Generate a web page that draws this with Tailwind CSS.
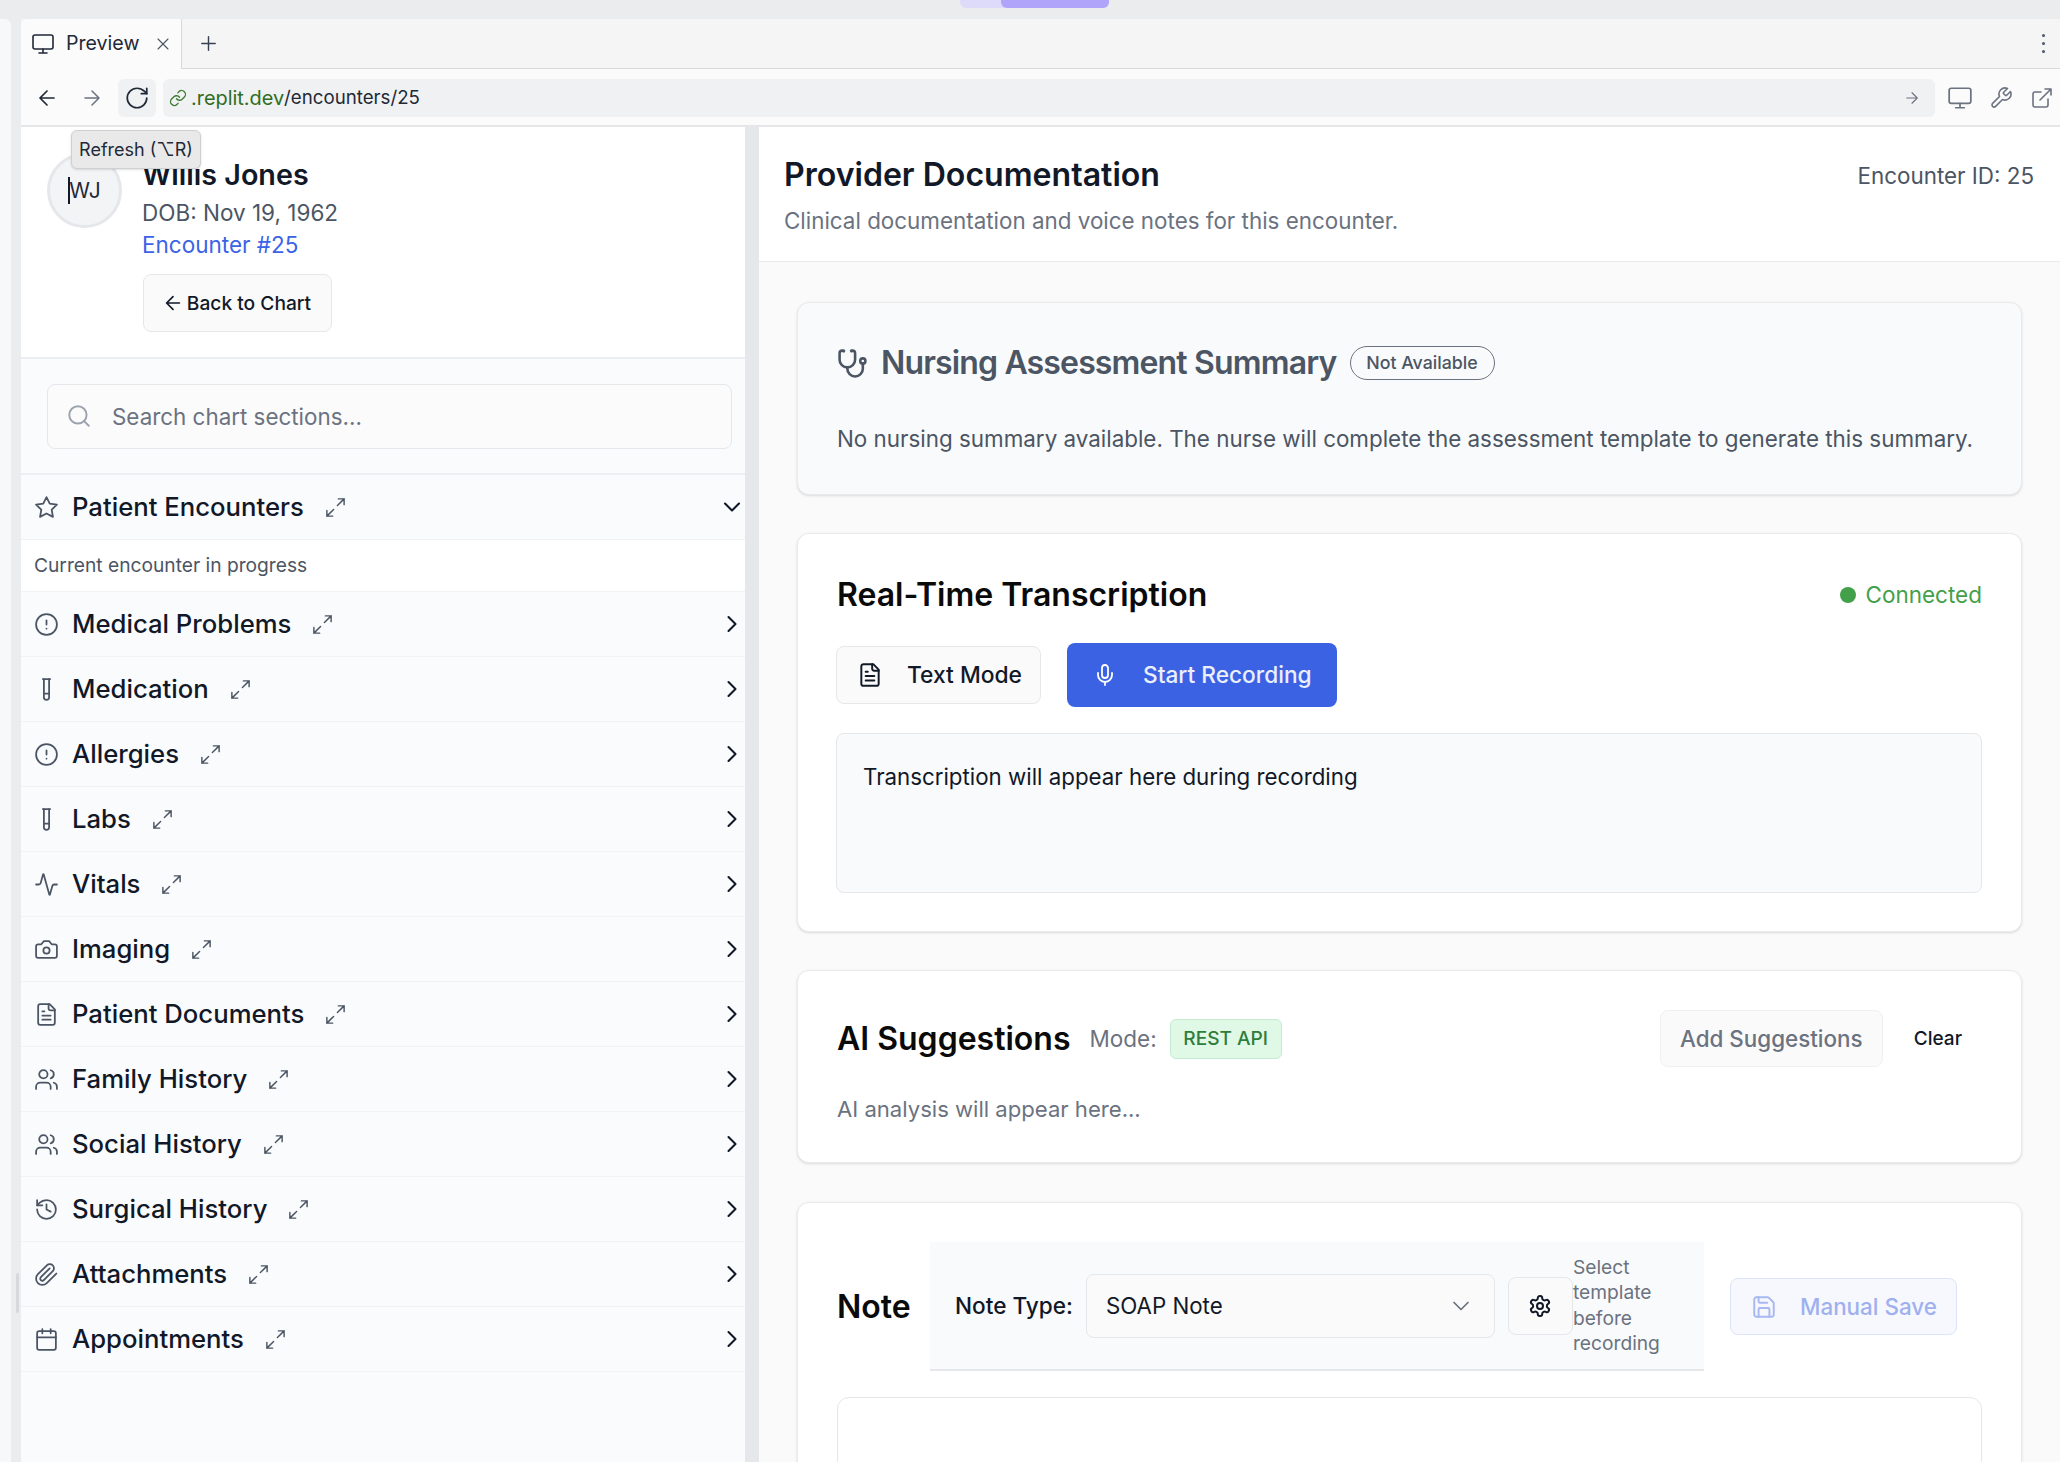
<!DOCTYPE html>
<html lang="en">
<head>
  <meta charset="UTF-8" />
  <title>Provider Documentation - Preview</title>
  <script src="https://cdn.jsdelivr.net/npm/@tailwindcss/browser@4"></script>
</head>
<body class="w-[2060px] h-[1462px] overflow-hidden bg-[#ebecee] font-['Inter',sans-serif] text-[#111827] [stroke-linecap:round] [stroke-linejoin:round]">

  <svg class="hidden">
    <symbol id="i-monitor" viewBox="0 0 24 24"><rect x="2" y="3" width="20" height="14" rx="2"/><path d="M8 21h8M12 17v4"/></symbol>
    <symbol id="i-x" viewBox="0 0 24 24"><path d="M18 6 6 18M6 6l12 12"/></symbol>
    <symbol id="i-plus" viewBox="0 0 24 24"><path d="M5 12h14M12 5v14"/></symbol>
    <symbol id="i-left" viewBox="0 0 24 24"><path d="m12 19-7-7 7-7M19 12H5"/></symbol>
    <symbol id="i-right" viewBox="0 0 24 24"><path d="M5 12h14M12 5l7 7-7 7"/></symbol>
    <symbol id="i-refresh" viewBox="0 0 24 24"><path d="M21 12a9 9 0 1 1-9-9c2.52 0 4.93 1 6.74 2.74L21 8"/><path d="M21 3v5h-5"/></symbol>
    <symbol id="i-link" viewBox="0 0 24 24"><path d="M10 13a5 5 0 0 0 7.54.54l3-3a5 5 0 0 0-7.07-7.07l-1.72 1.71"/><path d="M14 11a5 5 0 0 0-7.54-.54l-3 3a5 5 0 0 0 7.07 7.07l1.71-1.71"/></symbol>
    <symbol id="i-wrench" viewBox="0 0 24 24"><path d="M14.7 6.3a1 1 0 0 0 0 1.4l1.6 1.6a1 1 0 0 0 1.4 0l3.77-3.77a6 6 0 0 1-7.94 7.94l-6.91 6.91a2.12 2.12 0 0 1-3-3l6.91-6.91a6 6 0 0 1 7.94-7.94l-3.76 3.76z"/></symbol>
    <symbol id="i-external" viewBox="0 0 24 24"><path d="M15 3h6v6M10 14 21 3"/><path d="M18 13v6a2 2 0 0 1-2 2H5a2 2 0 0 1-2-2V8a2 2 0 0 1 2-2h6"/></symbol>
    <symbol id="i-search" viewBox="0 0 24 24"><circle cx="11" cy="11" r="8"/><path d="m21 21-4.3-4.3"/></symbol>
    <symbol id="i-star" viewBox="0 0 24 24"><polygon points="12 2 15.09 8.26 22 9.27 17 14.14 18.18 21.02 12 17.77 5.82 21.02 7 14.14 2 9.27 8.91 8.26 12 2"/></symbol>
    <symbol id="i-expand" viewBox="0 0 24 24"><path d="M15 3h6v6M21 3l-7 7M3 21l7-7M9 21H3v-6"/></symbol>
    <symbol id="i-down" viewBox="0 0 24 24"><path d="m6 9 6 6 6-6"/></symbol>
    <symbol id="i-chevron" viewBox="0 0 24 24"><path d="m9 18 6-6-6-6"/></symbol>
    <symbol id="i-alert" viewBox="0 0 24 24"><circle cx="12" cy="12" r="10"/><path d="M12 8v4M12 16h.01"/></symbol>
    <symbol id="i-tube" viewBox="0 0 24 24"><path d="M14.5 2v17.5c0 1.4-1.1 2.5-2.5 2.5s-2.5-1.1-2.5-2.5V2"/><path d="M8.5 2h7M14.5 16h-5"/></symbol>
    <symbol id="i-activity" viewBox="0 0 24 24"><path d="M22 12h-2.48a2 2 0 0 0-1.93 1.46l-2.35 8.36a.25.25 0 0 1-.48 0L9.24 2.18a.25.25 0 0 0-.48 0l-2.35 8.36A2 2 0 0 1 4.49 12H2"/></symbol>
    <symbol id="i-camera" viewBox="0 0 24 24"><path d="M14.5 4h-5L7 7H4a2 2 0 0 0-2 2v9a2 2 0 0 0 2 2h16a2 2 0 0 0 2-2V9a2 2 0 0 0-2-2h-3l-2.5-3z"/><circle cx="12" cy="13" r="3"/></symbol>
    <symbol id="i-file" viewBox="0 0 24 24"><path d="M15 2H6a2 2 0 0 0-2 2v16a2 2 0 0 0 2 2h12a2 2 0 0 0 2-2V7Z"/><path d="M14 2v4a2 2 0 0 0 2 2h4M10 9H8M16 13H8M16 17H8"/></symbol>
    <symbol id="i-users" viewBox="0 0 24 24"><path d="M16 21v-2a4 4 0 0 0-4-4H6a4 4 0 0 0-4 4v2"/><circle cx="9" cy="7" r="4"/><path d="M22 21v-2a4 4 0 0 0-3-3.87M16 3.13a4 4 0 0 1 0 7.75"/></symbol>
    <symbol id="i-history" viewBox="0 0 24 24"><path d="M3 12a9 9 0 1 0 9-9 9.75 9.75 0 0 0-6.74 2.74L3 8"/><path d="M3 3v5h5M12 7v5l4 2"/></symbol>
    <symbol id="i-clip" viewBox="0 0 24 24"><path d="m21.44 11.05-9.19 9.19a6 6 0 0 1-8.49-8.49l8.57-8.57A4 4 0 1 1 18 8.84l-8.59 8.57a2 2 0 0 1-2.83-2.83l8.49-8.48"/></symbol>
    <symbol id="i-calendar" viewBox="0 0 24 24"><path d="M8 2v4M16 2v4"/><rect x="3" y="4" width="18" height="18" rx="2"/><path d="M3 10h18"/></symbol>
    <symbol id="i-steth" viewBox="0 0 24 24"><path d="M4.8 2.3A.3.3 0 1 0 5 2H4a2 2 0 0 0-2 2v5a6 6 0 0 0 6 6 6 6 0 0 0 6-6V4a2 2 0 0 0-2-2h-1a.2.2 0 1 0 .3.3"/><path d="M8 15v1a6 6 0 0 0 6 6 6 6 0 0 0 6-6v-4"/><circle cx="20" cy="10" r="2"/></symbol>
    <symbol id="i-mic" viewBox="0 0 24 24"><path d="M12 2a3 3 0 0 0-3 3v7a3 3 0 0 0 6 0V5a3 3 0 0 0-3-3Z"/><path d="M19 10v2a7 7 0 0 1-14 0v-2M12 19v3"/></symbol>
    <symbol id="i-gear" viewBox="0 0 24 24"><path d="M12.22 2h-.44a2 2 0 0 0-2 2v.18a2 2 0 0 1-1 1.73l-.43.25a2 2 0 0 1-2 0l-.15-.08a2 2 0 0 0-2.73.73l-.22.38a2 2 0 0 0 .73 2.73l.15.1a2 2 0 0 1 1 1.72v.51a2 2 0 0 1-1 1.74l-.15.09a2 2 0 0 0-.73 2.73l.22.38a2 2 0 0 0 2.73.73l.15-.08a2 2 0 0 1 2 0l.43.25a2 2 0 0 1 1 1.73V20a2 2 0 0 0 2 2h.44a2 2 0 0 0 2-2v-.18a2 2 0 0 1 1-1.73l.43-.25a2 2 0 0 1 2 0l.15.08a2 2 0 0 0 2.73-.73l.22-.39a2 2 0 0 0-.73-2.73l-.15-.08a2 2 0 0 1-1-1.74v-.5a2 2 0 0 1 1-1.74l.15-.09a2 2 0 0 0 .73-2.73l-.22-.38a2 2 0 0 0-2.73-.73l-.15.08a2 2 0 0 1-2 0l-.43-.25a2 2 0 0 1-1-1.73V4a2 2 0 0 0-2-2z"/><circle cx="12" cy="12" r="3"/></symbol>
    <symbol id="i-save" viewBox="0 0 24 24"><path d="M15.2 3a2 2 0 0 1 1.4.6l3.8 3.8a2 2 0 0 1 .6 1.4V19a2 2 0 0 1-2 2H5a2 2 0 0 1-2-2V5a2 2 0 0 1 2-2z"/><path d="M17 21v-7a1 1 0 0 0-1-1H8a1 1 0 0 0-1 1v7M7 3v4a1 1 0 0 0 1 1h7"/></symbol>
  </svg>

  <!-- top strip -->
  <div class="h-[19px] flex">
    <div class="ml-[960px] w-[149px] h-[8px] bg-[#dddafa] rounded-b-md flex justify-end">
      <div class="w-[108px] h-full bg-[#afa3fa] rounded-b-md"></div>
    </div>
  </div>

  <div class="flex h-[1443px]">
    <!-- replit left pane edge -->
    <div class="w-[11px] bg-[#f7f8f9] rounded-tr-md relative">
      <div class="absolute right-[-8px] top-[1254px] w-[3px] h-[40px] bg-[#d6d8dc] rounded-full"></div>
    </div>
    <div class="w-[10px]"></div>

    <div class="w-[2039px] flex flex-col bg-white">
      <!-- tab bar -->
      <div class="h-[50px] flex items-center bg-[#f5f5f5] border-b border-[#d9d9d9] text-[20px] shrink-0">
        <div class="h-[50px] w-[161px] flex items-center bg-[#fbfbfb] border-r border-[#d9d9d9] rounded-tl-md pl-[10px]">
          <svg class="w-[24px] h-[24px] fill-none stroke-[#1f2937] stroke-[1.6] shrink-0"><use href="#i-monitor"/></svg>
          <span class="ml-[11px] mt-[1px] text-[19.6px] text-[#1f2937]">Preview</span>
          <svg class="ml-[14px] w-[20px] h-[20px] fill-none stroke-[#4b5563] stroke-[1.3] shrink-0"><use href="#i-x"/></svg>
        </div>
        <svg class="ml-[15px] w-[23px] h-[23px] fill-none stroke-[#374151] stroke-[1.5]"><use href="#i-plus"/></svg>
        <div class="ml-auto mr-[15px] flex flex-col gap-[5px]">
          <span class="w-[3px] h-[3px] rounded-full bg-[#4b5563]"></span>
          <span class="w-[3px] h-[3px] rounded-full bg-[#4b5563]"></span>
          <span class="w-[3px] h-[3px] rounded-full bg-[#4b5563]"></span>
        </div>
      </div>

      <!-- url bar -->
      <div class="h-[58px] flex items-center pt-[2px] bg-[#fbfbfb] border-b-2 border-[#e5e6e8] shrink-0 relative">
        <svg class="ml-[14px] w-[24px] h-[24px] fill-none stroke-[#1f2937] stroke-[1.7]"><use href="#i-left"/></svg>
        <svg class="ml-[21px] w-[24px] h-[24px] fill-none stroke-[#6b7280] stroke-[1.5]"><use href="#i-right"/></svg>
        <div class="ml-[14px] w-[38px] h-[38px] rounded-md bg-[#f0f1f3] flex items-center justify-center">
          <svg class="w-[26px] h-[26px] fill-none stroke-[#1f2937] stroke-[1.6]"><use href="#i-refresh"/></svg>
        </div>
        <div class="ml-[7px] w-[1772px] h-[38px] rounded-md bg-[#f0f1f3] flex items-center pl-[6px] pr-[14px]">
          <svg class="w-[18px] h-[18px] fill-none stroke-[#3d7c2f] stroke-[1.8]"><use href="#i-link"/></svg>
          <span class="ml-[4px] mt-[1px] text-[19.9px] text-[#2f6d22]">.replit.dev</span><span class="mt-[1px] text-[18.7px] text-[#1f2937]">/encounters/25</span>
          <svg class="ml-auto w-[18px] h-[18px] fill-none stroke-[#6b7280] stroke-[1.5]"><use href="#i-right"/></svg>
        </div>
        <svg class="ml-[12px] w-[26px] h-[26px] fill-none stroke-[#6b7280] stroke-[1.6]"><use href="#i-monitor"/></svg>
        <svg class="ml-[16px] w-[24px] h-[24px] fill-none stroke-[#6b7280] stroke-[1.6]"><use href="#i-wrench"/></svg>
        <svg class="ml-[17px] w-[24px] h-[24px] fill-none stroke-[#6b7280] stroke-[1.6]"><use href="#i-external"/></svg>

        <!-- tooltip -->
        <div class="absolute left-[50px] top-[61px] w-[130px] h-[39px] z-10 rounded-md bg-[#e9e9ea] border border-[#cfd0d2] shadow-sm flex items-center justify-center text-[18px] text-[#1f2937] whitespace-nowrap">Refresh (⌥R)</div>
      </div>

      <div class="flex flex-1 min-h-0">
        <!-- left sidebar -->
        <aside class="w-[724px] shrink-0 bg-[#fafbfd] flex flex-col">
          <div class="h-[232px] bg-white border-b-2 border-[#eceef1] flex pl-[26px] pt-[26px] shrink-0">
            <div class="w-[75px] h-[75px] rounded-full bg-[#f3f4f6] border-[3px] border-[#e5e7eb] flex items-center justify-center text-[21px] text-[#1f2937] shrink-0">
              <span class="w-[2px] h-[27px] bg-[#111827] -mr-[1px]"></span>WJ
            </div>
            <div class="ml-[21px]">
              <h2 class="-ml-[1px] text-[28.7px] leading-[36px] mt-[4px] font-semibold text-[#111827]">Willis Jones</h2>
              <p class="-ml-[1px] text-[22.5px] leading-[32px] mt-[4px] text-[#4b5563]">DOB: Nov 19, 1962</p>
              <p class="-ml-[1px] text-[22.5px] leading-[32px] text-[#3b63e6]">Encounter #25</p>
              <button class="mt-[13px] w-[189px] h-[58px] rounded-lg border border-[#e5e7eb] bg-[#fafafa] flex items-center justify-center gap-[3px] pr-[2px] text-[19.2px] font-medium text-[#111827]">
                <svg class="w-[22px] h-[22px] fill-none stroke-[#111827] stroke-[1.8]"><use href="#i-left"/></svg>Back to Chart
              </button>
            </div>
          </div>

          <div class="h-[116px] flex items-center pl-[26px] pr-[13px] border-b-2 border-[#eceef1] shrink-0">
            <div class="w-full h-[65px] rounded-lg border border-[#e5e7eb] bg-[#fbfbfb] flex items-center pl-[18px] gap-[20px]">
              <svg class="w-[26px] h-[26px] fill-none stroke-[#9ca3af] stroke-[1.8]"><use href="#i-search"/></svg>
              <span class="mt-[1px] text-[22.4px] text-[#6b7280]">Search chart sections...</span>
            </div>
          </div>

          <div class="h-[65px] flex items-center pl-[13px] border-b border-[#f1f2f4] shrink-0">
            <svg class="w-[25px] h-[25px] fill-none stroke-[#4b5563] stroke-[1.7]"><use href="#i-star"/></svg>
            <span class="ml-[13px] text-[25.7px] font-medium">Patient Encounters</span>
            <svg class="ml-[20px] w-[23px] h-[23px] fill-none stroke-[#4b5563] stroke-[1.5]"><use href="#i-expand"/></svg>
            <svg class="ml-auto -mr-[1px] w-[28px] h-[28px] fill-none stroke-[#111827] stroke-[1.8]"><use href="#i-down"/></svg>
          </div>
          <div class="h-[52px] flex items-center pl-[13px] bg-white text-[19.2px] text-[#4b5563] border-b border-[#f1f2f4] shrink-0">Current encounter in progress</div>

          <div class="h-[65px] flex items-center pl-[13px] border-b border-[#f1f2f4] shrink-0">
            <svg class="w-[25px] h-[25px] fill-none stroke-[#4b5563] stroke-[1.7]"><use href="#i-alert"/></svg>
            <span class="ml-[13px] text-[25.7px] font-medium">Medical Problems</span>
            <svg class="ml-[20px] w-[23px] h-[23px] fill-none stroke-[#4b5563] stroke-[1.5]"><use href="#i-expand"/></svg>
            <svg class="ml-auto -mr-[1px] w-[28px] h-[28px] fill-none stroke-[#111827] stroke-[1.8]"><use href="#i-chevron"/></svg>
          </div>
          <div class="h-[65px] flex items-center pl-[13px] border-b border-[#f1f2f4] shrink-0">
            <svg class="w-[25px] h-[25px] fill-none stroke-[#4b5563] stroke-[1.7]"><use href="#i-tube"/></svg>
            <span class="ml-[13px] text-[25.7px] font-medium">Medication</span>
            <svg class="ml-[20px] w-[23px] h-[23px] fill-none stroke-[#4b5563] stroke-[1.5]"><use href="#i-expand"/></svg>
            <svg class="ml-auto -mr-[1px] w-[28px] h-[28px] fill-none stroke-[#111827] stroke-[1.8]"><use href="#i-chevron"/></svg>
          </div>
          <div class="h-[65px] flex items-center pl-[13px] border-b border-[#f1f2f4] shrink-0">
            <svg class="w-[25px] h-[25px] fill-none stroke-[#4b5563] stroke-[1.7]"><use href="#i-alert"/></svg>
            <span class="ml-[13px] text-[25.7px] font-medium">Allergies</span>
            <svg class="ml-[20px] w-[23px] h-[23px] fill-none stroke-[#4b5563] stroke-[1.5]"><use href="#i-expand"/></svg>
            <svg class="ml-auto -mr-[1px] w-[28px] h-[28px] fill-none stroke-[#111827] stroke-[1.8]"><use href="#i-chevron"/></svg>
          </div>
          <div class="h-[65px] flex items-center pl-[13px] border-b border-[#f1f2f4] shrink-0">
            <svg class="w-[25px] h-[25px] fill-none stroke-[#4b5563] stroke-[1.7]"><use href="#i-tube"/></svg>
            <span class="ml-[13px] text-[25.7px] font-medium">Labs</span>
            <svg class="ml-[20px] w-[23px] h-[23px] fill-none stroke-[#4b5563] stroke-[1.5]"><use href="#i-expand"/></svg>
            <svg class="ml-auto -mr-[1px] w-[28px] h-[28px] fill-none stroke-[#111827] stroke-[1.8]"><use href="#i-chevron"/></svg>
          </div>
          <div class="h-[65px] flex items-center pl-[13px] border-b border-[#f1f2f4] shrink-0">
            <svg class="w-[25px] h-[25px] fill-none stroke-[#4b5563] stroke-[1.7]"><use href="#i-activity"/></svg>
            <span class="ml-[13px] text-[25.7px] font-medium">Vitals</span>
            <svg class="ml-[20px] w-[23px] h-[23px] fill-none stroke-[#4b5563] stroke-[1.5]"><use href="#i-expand"/></svg>
            <svg class="ml-auto -mr-[1px] w-[28px] h-[28px] fill-none stroke-[#111827] stroke-[1.8]"><use href="#i-chevron"/></svg>
          </div>
          <div class="h-[65px] flex items-center pl-[13px] border-b border-[#f1f2f4] shrink-0">
            <svg class="w-[25px] h-[25px] fill-none stroke-[#4b5563] stroke-[1.7]"><use href="#i-camera"/></svg>
            <span class="ml-[13px] text-[25.7px] font-medium">Imaging</span>
            <svg class="ml-[20px] w-[23px] h-[23px] fill-none stroke-[#4b5563] stroke-[1.5]"><use href="#i-expand"/></svg>
            <svg class="ml-auto -mr-[1px] w-[28px] h-[28px] fill-none stroke-[#111827] stroke-[1.8]"><use href="#i-chevron"/></svg>
          </div>
          <div class="h-[65px] flex items-center pl-[13px] border-b border-[#f1f2f4] shrink-0">
            <svg class="w-[25px] h-[25px] fill-none stroke-[#4b5563] stroke-[1.7]"><use href="#i-file"/></svg>
            <span class="ml-[13px] text-[25.7px] font-medium">Patient Documents</span>
            <svg class="ml-[20px] w-[23px] h-[23px] fill-none stroke-[#4b5563] stroke-[1.5]"><use href="#i-expand"/></svg>
            <svg class="ml-auto -mr-[1px] w-[28px] h-[28px] fill-none stroke-[#111827] stroke-[1.8]"><use href="#i-chevron"/></svg>
          </div>
          <div class="h-[65px] flex items-center pl-[13px] border-b border-[#f1f2f4] shrink-0">
            <svg class="w-[25px] h-[25px] fill-none stroke-[#4b5563] stroke-[1.7]"><use href="#i-users"/></svg>
            <span class="ml-[13px] text-[25.7px] font-medium">Family History</span>
            <svg class="ml-[20px] w-[23px] h-[23px] fill-none stroke-[#4b5563] stroke-[1.5]"><use href="#i-expand"/></svg>
            <svg class="ml-auto -mr-[1px] w-[28px] h-[28px] fill-none stroke-[#111827] stroke-[1.8]"><use href="#i-chevron"/></svg>
          </div>
          <div class="h-[65px] flex items-center pl-[13px] border-b border-[#f1f2f4] shrink-0">
            <svg class="w-[25px] h-[25px] fill-none stroke-[#4b5563] stroke-[1.7]"><use href="#i-users"/></svg>
            <span class="ml-[13px] text-[25.7px] font-medium">Social History</span>
            <svg class="ml-[20px] w-[23px] h-[23px] fill-none stroke-[#4b5563] stroke-[1.5]"><use href="#i-expand"/></svg>
            <svg class="ml-auto -mr-[1px] w-[28px] h-[28px] fill-none stroke-[#111827] stroke-[1.8]"><use href="#i-chevron"/></svg>
          </div>
          <div class="h-[65px] flex items-center pl-[13px] border-b border-[#f1f2f4] shrink-0">
            <svg class="w-[25px] h-[25px] fill-none stroke-[#4b5563] stroke-[1.7]"><use href="#i-history"/></svg>
            <span class="ml-[13px] text-[25.7px] font-medium">Surgical History</span>
            <svg class="ml-[20px] w-[23px] h-[23px] fill-none stroke-[#4b5563] stroke-[1.5]"><use href="#i-expand"/></svg>
            <svg class="ml-auto -mr-[1px] w-[28px] h-[28px] fill-none stroke-[#111827] stroke-[1.8]"><use href="#i-chevron"/></svg>
          </div>
          <div class="h-[65px] flex items-center pl-[13px] border-b border-[#f1f2f4] shrink-0">
            <svg class="w-[25px] h-[25px] fill-none stroke-[#4b5563] stroke-[1.7]"><use href="#i-clip"/></svg>
            <span class="ml-[13px] text-[25.7px] font-medium">Attachments</span>
            <svg class="ml-[20px] w-[23px] h-[23px] fill-none stroke-[#4b5563] stroke-[1.5]"><use href="#i-expand"/></svg>
            <svg class="ml-auto -mr-[1px] w-[28px] h-[28px] fill-none stroke-[#111827] stroke-[1.8]"><use href="#i-chevron"/></svg>
          </div>
          <div class="h-[65px] flex items-center pl-[13px] border-b border-[#f1f2f4] shrink-0">
            <svg class="w-[25px] h-[25px] fill-none stroke-[#4b5563] stroke-[1.7]"><use href="#i-calendar"/></svg>
            <span class="ml-[13px] text-[25.7px] font-medium">Appointments</span>
            <svg class="ml-[20px] w-[23px] h-[23px] fill-none stroke-[#4b5563] stroke-[1.5]"><use href="#i-expand"/></svg>
            <svg class="ml-auto -mr-[1px] w-[28px] h-[28px] fill-none stroke-[#111827] stroke-[1.8]"><use href="#i-chevron"/></svg>
          </div>
        </aside>

        <!-- drag handle -->
        <div class="w-[14px] bg-[#e5e7eb] shrink-0"></div>

        <!-- main -->
        <main class="flex-1 min-w-0 bg-[#fafafa] flex flex-col overflow-hidden">
          <header class="h-[135px] bg-white border-b border-[#e9eaec] pl-[25px] pr-[26px] flex justify-between shrink-0">
            <div>
              <h1 class="mt-[27px] text-[32.1px] leading-[42px] font-semibold text-[#111827]">Provider Documentation</h1>
              <p class="mt-[9px] text-[22.4px] leading-[32px] text-[#6b7280]">Clinical documentation and voice notes for this encounter.</p>
            </div>
            <span class="mt-[34px] text-[22.4px] leading-[30px] text-[#4b5563]">Encounter ID: 25</span>
          </header>

          <div class="pl-[38px] pr-[38px] pt-[40px] flex flex-col gap-[38px]">
            <section class="h-[193px] rounded-xl border border-[#e9eaec] bg-[#f9fafb] shadow-sm pl-[39px] pt-[40px] shrink-0">
              <div class="flex items-center h-[40px]">
                <svg class="w-[31px] h-[31px] fill-none stroke-[#4b5563] stroke-2"><use href="#i-steth"/></svg>
                <h3 class="ml-[13px] text-[32px] tracking-[-0.85px] font-semibold text-[#4b5563]">Nursing Assessment Summary</h3>
                <span class="ml-[13px] h-[34px] w-[145px] rounded-full border border-[#6b7280] flex items-center justify-center text-[17.8px] font-medium text-[#4b5563]">Not Available</span>
              </div>
              <p class="mt-[40px] text-[22.4px] leading-[32px] text-[#4b5563]">No nursing summary available. The nurse will complete the assessment template to generate this summary.</p>
            </section>

            <section class="h-[399px] rounded-xl border border-[#e9eaec] bg-white shadow-sm px-[39px] pt-[41px] shrink-0">
              <div class="flex items-center justify-between h-[40px]">
                <h3 class="text-[32px] font-semibold text-[#0a0a0a]">Real-Time Transcription</h3>
                <span class="flex items-center gap-[9px] text-[22.5px] text-[#43a04a]"><span class="w-[16px] h-[16px] rounded-full bg-[#43a04a]"></span>Connected</span>
              </div>
              <div class="mt-[28px] -ml-[1px] flex items-center gap-[26px]">
                <button class="w-[205px] h-[58px] rounded-lg border border-[#e5e7eb] bg-[#fafafa] flex items-center pl-[20px] text-[22.8px] font-medium text-[#111827]">
                  <svg class="w-[26px] h-[26px] fill-none stroke-[#111827] stroke-[1.8]"><use href="#i-file"/></svg>
                  <span class="ml-[24px]">Text Mode</span>
                </button>
                <button class="w-[270px] h-[64px] rounded-lg bg-[#3b62e3] flex items-center pl-[26px] text-[22.7px] font-medium text-white/90">
                  <svg class="w-[24px] h-[24px] fill-none stroke-white stroke-[1.8]"><use href="#i-mic"/></svg>
                  <span class="ml-[26px]">Start Recording</span>
                </button>
              </div>
              <div class="mt-[26px] -ml-[1px] h-[160px] rounded-lg border border-[#e5e7eb] bg-[#f9fafb] pl-[26px] pt-[27px] text-[22.3px] leading-[32px] text-[#111827]">Transcription will appear here during recording</div>
            </section>

            <section class="h-[193px] rounded-xl border border-[#e9eaec] bg-white shadow-sm pl-[39px] pr-[38px] pt-[39px] shrink-0">
              <div class="flex items-center h-[57px]">
                <h3 class="text-[32px] font-semibold text-[#0a0a0a]">AI Suggestions</h3>
                <span class="ml-[19px] text-[22.5px] text-[#6b7280]">Mode:</span>
                <span class="ml-[13px] h-[40px] w-[112px] rounded-md border border-[#c5ecd0] bg-[#e0f8e6] flex items-center justify-center text-[19.1px] font-medium text-[#2f7d3b]">REST API</span>
                <button class="ml-auto w-[223px] h-[57px] rounded-lg border border-[#eff0f2] bg-[#fafafa] text-[22.4px] font-medium text-[#6b7280]">Add Suggestions</button>
                <span class="ml-[31px] mr-[21px] mt-[1px] text-[19px] font-medium text-[#111827]">Clear</span>
              </div>
              <p class="mt-[26px] text-[22.1px] leading-[32px] text-[#6b7280]">AI analysis will appear here...</p>
            </section>

            <section class="mt-[1px] h-[400px] rounded-xl border border-[#e9eaec] bg-white shadow-sm px-[39px] pt-[39px] shrink-0">
              <div class="flex items-center">
                <h3 class="text-[32px] font-semibold text-[#0a0a0a] w-[93px]">Note</h3>
                <div class="w-[774px] h-[129px] bg-[#f9fafb] border-b-2 border-[#e5e7eb] flex items-center pl-[25px]">
                  <span class="mt-[1px] text-[22.6px] font-medium text-[#111827]">Note Type:</span>
                  <div class="ml-[13px] w-[409px] h-[64px] rounded-lg border border-[#e5e7eb] bg-[#fafafa] flex items-center pl-[19px] pr-[19px] text-[22.3px] text-[#111827]">
                    SOAP Note
                    <svg class="ml-auto w-[28px] h-[28px] fill-none stroke-[#6b7280] stroke-[1.5]"><use href="#i-down"/></svg>
                  </div>
                  <div class="ml-[13px] w-[65px] h-[58px] rounded-lg border border-[#e5e7eb] bg-[#fafafa] flex items-center justify-center shrink-0">
                    <svg class="w-[24px] h-[24px] fill-none stroke-[#111827] stroke-2"><use href="#i-gear"/></svg>
                  </div>
                  <span class="w-[100px] text-[19.2px] leading-[25.5px] text-[#6b7280]">Select template before recording</span>
                </div>
                <button class="ml-[26px] w-[227px] h-[57px] rounded-lg border border-[#dbe4fb] bg-[#f6f8fe] flex items-center pl-[20px] text-[22.4px] font-medium text-[#9fb0ee]">
                  <svg class="w-[26px] h-[26px] fill-none stroke-[#a8b8f0] stroke-[1.8]"><use href="#i-save"/></svg>
                  <span class="ml-[23px]">Manual Save</span>
                </button>
              </div>
              <div class="mt-[26px] h-[200px] rounded-xl border border-[#e5e7eb] bg-white"></div>
            </section>
          </div>
        </main>
      </div>
    </div>
  </div>
</body>
</html>
